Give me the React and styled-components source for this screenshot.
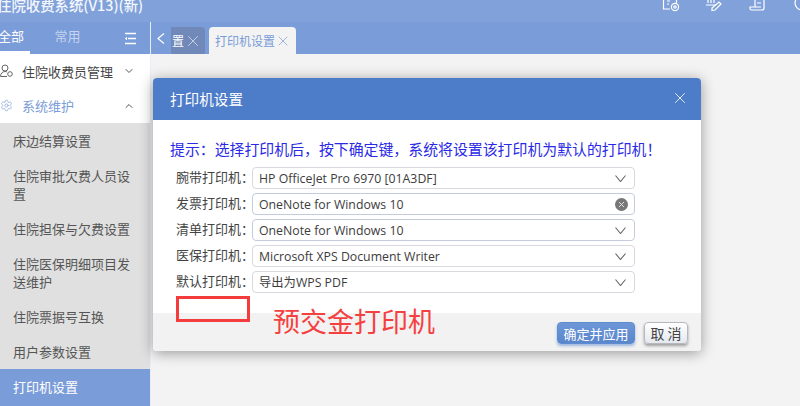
import React from "react";
import styled, { createGlobalStyle } from "styled-components";
import { ChevronDown, ChevronUp, X, Settings } from "lucide-react";

const CN = `"Noto Sans CJK SC", "Noto Sans", sans-serif`;

const Global = createGlobalStyle`
  html, body { margin: 0; padding: 0; width: 800px; height: 406px; overflow: hidden; background: #f3f3f3; }
  * { box-sizing: border-box; }
  body { font-family: ${CN}; }
`;

const Page = styled.div`
  position: relative; width: 800px; height: 406px; overflow: hidden;
  display: flex; flex-direction: column; background: #f3f3f3;
`;
const TitleBar = styled.header`
  height: 22px; flex: none; background: #80a1da; color: #fff;
  display: flex; align-items: flex-start; justify-content: space-between; overflow: hidden;
`;
const AppName = styled.div`
  font-size: 14.4px; font-weight: 500; line-height: 12px; margin: -1px 0 0 -3px; white-space: nowrap;
  color: #f4f7fd;
`;
const TitleIcons = styled.div`
  display: flex; gap: 24px; margin-right: -13px; margin-top: -3px; color: #fff;
`;
const Body = styled.div` flex: 1; display: flex; min-height: 0; `;
const Sidebar = styled.aside`
  width: 150px; flex: none; background: #e0e0e0; display: flex; flex-direction: column;
`;
const SideTabs = styled.div`
  height: 32px; flex: none; background: #7a9cd8; display: flex; align-items: center;
`;
const SideTab = styled.div`
  width: ${p => p.$w}px; height: 32px; display: flex; align-items: center; justify-content: ${p => p.$align || "center"};
  font-size: 13px; color: ${p => (p.$active ? "#fff" : "#c5d3ee")};
  border-bottom: 3px solid ${p => (p.$active ? "#fff" : "transparent")};
  padding-bottom: 3px; white-space: nowrap; overflow: hidden;
`;
const ActiveSideLabel = styled.span` margin-left: -2px; `;
const Burger = styled.div` margin-left: auto; margin-right: 13px; display: flex; `;
const Menu = styled.div` height: 69px; flex: none; background: #fff; `;
const MenuRow = styled.div`
  height: 35px; display: flex; align-items: center; gap: 9px; padding: 0 15px 0 0;
  font-size: 13px; color: ${p => (p.$open ? "#7a9cd8" : "#444")};
  &:first-child { height: 34px; }
`;
const MenuLabel = styled.span` flex: 1; white-space: nowrap; `;
const SubList = styled.div` flex: 1; display: flex; flex-direction: column; min-height: 0; `;
const SubItem = styled.div`
  padding: 8.5px 20px 8.5px 13px; font-size: 13px; line-height: 18px;
  color: ${p => (p.$active ? "#fff" : "#555")};
  background: ${p => (p.$active ? "#7a9cd8" : "transparent")};
  ${p => p.$active && "flex: 1;"}
`;
const Main = styled.main` flex: 1; display: flex; flex-direction: column; min-width: 0; border-left: 1px solid #e9edf6; `;
const TabStrip = styled.div`
  height: 32px; flex: none; background: #7a9cd8; display: flex; align-items: flex-end;
`;
const Back = styled.div`
  width: 20px; height: 27px; flex: none; color: #fff; display: flex; align-items: flex-start; padding: 6px 0 0 6px;
`;
const GhostTab = styled.div`
  height: 27px; width: 34px; flex: none; background: #7089b9; border-radius: 0 4px 0 0; margin-right: 4px;
  display: flex; align-items: center; font-size: 12px; color: #fff; padding-left: 1px;
`;
const ActiveTab = styled.div`
  height: 27px; width: 87px; flex: none; background: #f3f3f3; border-radius: 4px 4px 0 0;
  display: flex; align-items: center; padding-left: 6px;
  font-size: 12px; color: #7a9cd8;
`;
const Content = styled.div` flex: 1; `;

const Modal = styled.section`
  position: absolute; left: 153px; top: 78px; width: 548px; height: 273px;
  background: #fff; border-radius: 4px; overflow: hidden;
  display: flex; flex-direction: column;
`;
const ModalShadow = styled.div`
  position: absolute; left: 153px; top: 78px; width: 548px; height: 273px; border-radius: 4px;
  box-shadow: 0 2px 14px rgba(0,0,0,.38);
`;
const ModalHead = styled.div`
  height: 42px; flex: none; background: #4d7cc9; color: #fff;
  display: flex; align-items: center; justify-content: space-between; padding: 0 12px 2px 17px;
  font-size: 14.6px;
`;
const ModalMain = styled.div` flex: 1; padding: 18px 0 0 17px; `;
const Tip = styled.div`
  font-size: 14.9px; line-height: 22px; color: #2a2ae6; white-space: nowrap; margin-bottom: 7px;
`;
const Rows = styled.div` display: flex; flex-direction: column; gap: 4px; padding-left: 6px; `;
const Row = styled.div` display: flex; align-items: center; height: 22px; `;
const Label = styled.label`
  width: 76px; font-size: 13px; color: #444; white-space: nowrap; flex: none; margin-bottom: 3px;
`;
const Select = styled.div`
  width: 383px; height: 22px; border: 1px solid ${p => (p.$strong ? "#c3cbdc" : "#d8d8de")}; border-radius: 4px; background: #fff;
  display: flex; align-items: center; justify-content: space-between; padding: 0 8px 0 6px;
  font-family: "Open Sans", ${CN}; font-size: 12.3px; color: #3c3c3c; white-space: nowrap;
`;
const ClearIcon = styled.span`
  width: 13px; height: 13px; border-radius: 50%; background: #777; color: #eee;
  display: flex; align-items: center; justify-content: center; margin-right: -2px;
`;
const ModalFoot = styled.div`
  height: 38px; flex: none; background: #f2f2f2; display: flex; justify-content: flex-end; align-items: flex-start; gap: 9px; padding: 9px 13px 0 0;
`;
const Primary = styled.button`
  width: 78px; height: 22px; border: 1px solid #5f8bd0; border-radius: 4px; padding: 0; font: 400 13px ${CN};
  color: #fff; background: linear-gradient(#6e97d8, #5a86cc); box-shadow: 0 2px 3px rgba(90,134,204,.55);
`;
const Secondary = styled.button`
  width: 44px; height: 22px; border: 1px solid #b8b8bc; border-radius: 4px; padding: 0; font: 400 14px ${CN};
  color: #444; background: linear-gradient(#fff, #e4e8f0); box-shadow: 0 2px 3px rgba(0,0,0,.35);
`;
const RedBox = styled.div`
  position: absolute; left: 176px; top: 296px; width: 74px; height: 26px; border: 3px solid #f53c3c;
`;
const RedNote = styled.div`
  position: absolute; left: 273px; top: 302px; font-size: 27px; line-height: 38px; color: #f54040; white-space: nowrap;
`;

const rows = [
  ["腕带打印机：", "HP OfficeJet Pro 6970 [01A3DF]"],
  ["发票打印机：", "OneNote for Windows 10", "clear"],
  ["清单打印机：", "OneNote for Windows 10"],
  ["医保打印机：", "Microsoft XPS Document Writer"],
  ["默认打印机：", "导出为WPS PDF"],
];
const subs = ["床边结算设置", "住院审批欠费人员设置", "住院担保与欠费设置", "住院医保明细项目发送维护", "住院票据号互换", "用户参数设置"];

const Ic = ({ children }) => (
  <svg width="20" height="16" viewBox="0 0 20 16" fill="none" stroke="currentColor" strokeWidth="1.2">{children}</svg>
);

const TabClose = ({ size, color }) => (
  <X size={size} strokeWidth={1.1} color={color} style={{ flex: "none" }} />
);

export default function App() {
  return (
    <Page>
      <Global />
      <TitleBar>
        <AppName>住院收费系统(V13)(新)</AppName>
        <TitleIcons>
          <Ic><path d="M9 12H2.500V0h13v6" /><circle cx="14" cy="10" r="3.600" /><circle cx="14" cy="10" r="1.200" /><path d="M6 4h3M6 7h2" /></Ic>
          <Ic><path d="M3 0v6M6 0v6M9 0v6M1 8h10" /><path d="M7 11l7-6 2 2-6 6-3 .500z" /></Ic>
          <Ic><path d="M6 0v10H1v1.500A1.500 1.500 0 0 0 2.500 13H13a2 2 0 0 0 2-2V0" /><path d="M8 6h4M6 10h6" /></Ic>
          <Ic><circle cx="9" cy="6" r="7" /></Ic>
        </TitleIcons>
      </TitleBar>
      <Body>
        <Sidebar>
          <SideTabs>
            <SideTab $active $w={30} $align="flex-start"><ActiveSideLabel>全部</ActiveSideLabel></SideTab>
            <SideTab $w={75}>常用</SideTab>
            <Burger>
              <svg width="13" height="13" viewBox="0 0 13 13" stroke="#fff" strokeWidth="1.600" fill="none">
                <path d="M1 1.500h11M4 6.500h8M1 11.500h11" />
                <path d="M3 4.800L.8 6.500 3 8.200z" fill="#fff" stroke="none" />
              </svg>
            </Burger>
          </SideTabs>
          <Menu>
            <MenuRow>
              <svg width="13" height="14" viewBox="0 0 13 14" fill="none" stroke="#666" strokeWidth="1" style={{ flex: "none" }}>
                <circle cx="5" cy="4" r="3" />
                <path d="M.500 12.500c0-3 2-5 4.500-5 1 0 1.500.200 2 .500M.500 12.500H7" />
                <circle cx="10" cy="10" r="2.300" />
              </svg>
              <MenuLabel>住院收费员管理</MenuLabel>
              <ChevronDown size={12} color="#555" />
            </MenuRow>
            <MenuRow $open>
              <Settings size={13} color="#8ba8dc" strokeWidth={1.4} style={{ flex: "none" }} />
              <MenuLabel>系统维护</MenuLabel>
              <ChevronUp size={12} color="#555" />
            </MenuRow>
          </Menu>
          <SubList>
            {subs.map(s => <SubItem key={s}>{s}</SubItem>)}
            <SubItem $active>打印机设置</SubItem>
          </SubList>
        </Sidebar>
        <Main>
          <TabStrip>
            <Back>
              <svg width="8" height="11" viewBox="0 0 8 11" fill="none" stroke="#fff" strokeWidth="1.200"><path d="M7 .500L1 5.500l6 5" /></svg>
            </Back>
            <GhostTab>置<TabClose size={18} color="#d7e0f2" /></GhostTab>
            <ActiveTab>打印机设置<TabClose size={16} /></ActiveTab>
          </TabStrip>
          <Content />
        </Main>
      </Body>
      <ModalShadow />
      <Modal>
        <ModalHead>打印机设置<X size={18} strokeWidth={1.100} /></ModalHead>
        <ModalMain>
          <Tip>提示：选择打印机后，按下确定键，系统将设置该打印机为默认的打印机！</Tip>
          <Rows>
            {rows.map(([l, v, c], i) => (
              <Row key={l}>
                <Label>{l}</Label>
                <Select $strong={i === 1 || i === 2}>
                  <span>{v}</span>
                  {c ? (
                    <ClearIcon><X size={9} strokeWidth={2.400} /></ClearIcon>
                  ) : (
                    <svg width="11" height="7" viewBox="0 0 11 7" fill="none" stroke="#666" strokeWidth="1.100"><path d="M.500.500l5 6 5-6" /></svg>
                  )}
                </Select>
              </Row>
            ))}
          </Rows>
        </ModalMain>
        <ModalFoot>
          <Primary>确定并应用</Primary>
          <Secondary>取 消</Secondary>
        </ModalFoot>
      </Modal>
      <RedBox />
      <RedNote>预交金打印机</RedNote>
    </Page>
  );
}
